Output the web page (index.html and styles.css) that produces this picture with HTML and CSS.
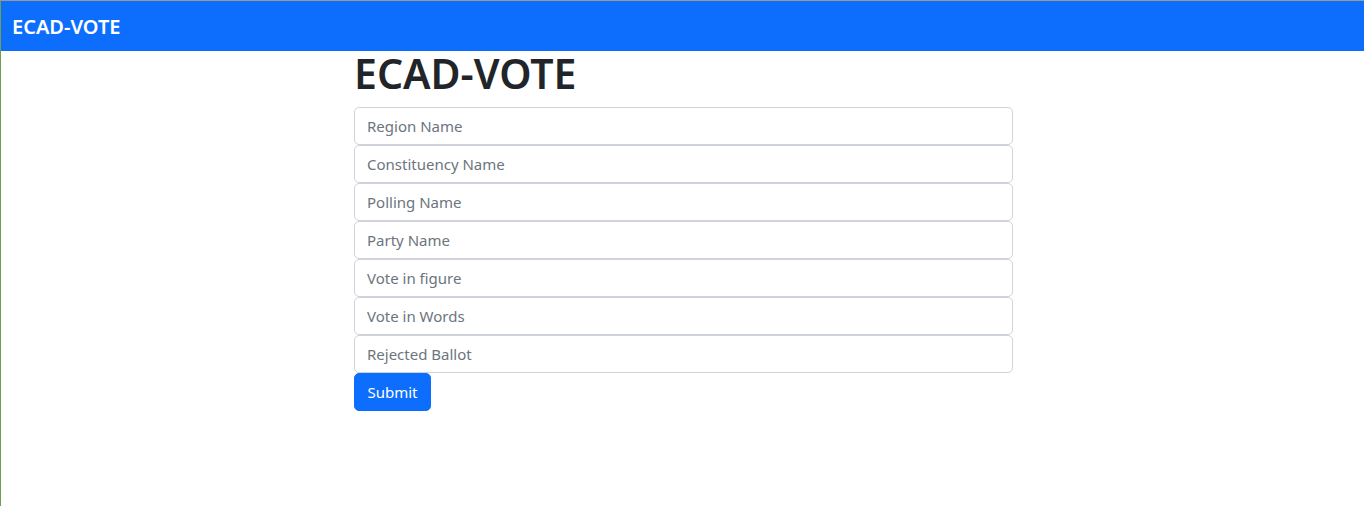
FILE: index.html
```html
<!DOCTYPE html>
<html lang="en">
<head>
<meta charset="utf-8">
<title>ECAD-VOTE</title>
<link rel="stylesheet" href="styles.css">
</head>
<body>
<nav class="navbar">
  <a class="brand" href="#">ECAD-VOTE</a>
</nav>
<main class="container">
  <h1 class="title">ECAD-VOTE</h1>
  <form class="vote-form">
    <input class="field" type="text" placeholder="Region Name">
    <input class="field" type="text" placeholder="Constituency Name">
    <input class="field" type="text" placeholder="Polling Name">
    <input class="field" type="text" placeholder="Party Name">
    <input class="field" type="text" placeholder="Vote in figure">
    <input class="field" type="text" placeholder="Vote in Words">
    <input class="field" type="text" placeholder="Rejected Ballot">
    <div class="actions"><button class="btn" type="button">Submit</button></div>
  </form>
</main>
</body>
</html>
```
FILE: styles.css
```css
* { box-sizing: border-box; }
html, body { margin: 0; padding: 0; }
body {
  font-family: "Noto Sans", "Open Sans", sans-serif;
  font-size: 16px;
  line-height: 1.5;
  color: #212529;
  background: #fff;
  border-top: 1px solid #9a9a9a;
  border-left: 1px solid #6f9f4f;
  min-height: 506px;
}
.navbar {
  height: 50px;
  background: #0d6efd;
  display: flex;
  align-items: center;
  padding: 0 11px;
}
.brand {
  color: #fff;
  text-decoration: none;
  font-size: 20px;
  font-weight: 600;
  line-height: 1;
  padding-top: 1px;
}
.container {
  width: 661px;
  margin: 0 auto;
  padding-left: 2px;
}
.title {
  margin: 0 0 12px;
  font-size: 41px;
  font-weight: 600;
  line-height: 44px;
  height: 44px;
  color: #212529;
}
.vote-form {
  display: flex;
  flex-direction: column;
}
.field {
  display: block;
  width: 100%;
  height: 38px;
  padding: 6px 12px;
  font: inherit;
  font-size: 15px;
  color: #212529;
  background: #fff;
  border: 1px solid #ced4da;
  border-radius: 5px;
  outline: none;
}
.field::placeholder { color: #6c757d; opacity: 1; }
.actions { display: flex; }
.btn {
  height: 38px;
  width: 77px;
  padding: 0 12px;
  font: inherit;
  font-size: 15px;
  color: #fff;
  background: #0d6efd;
  border: 1px solid #0d6efd;
  border-radius: 5px;
}
```
